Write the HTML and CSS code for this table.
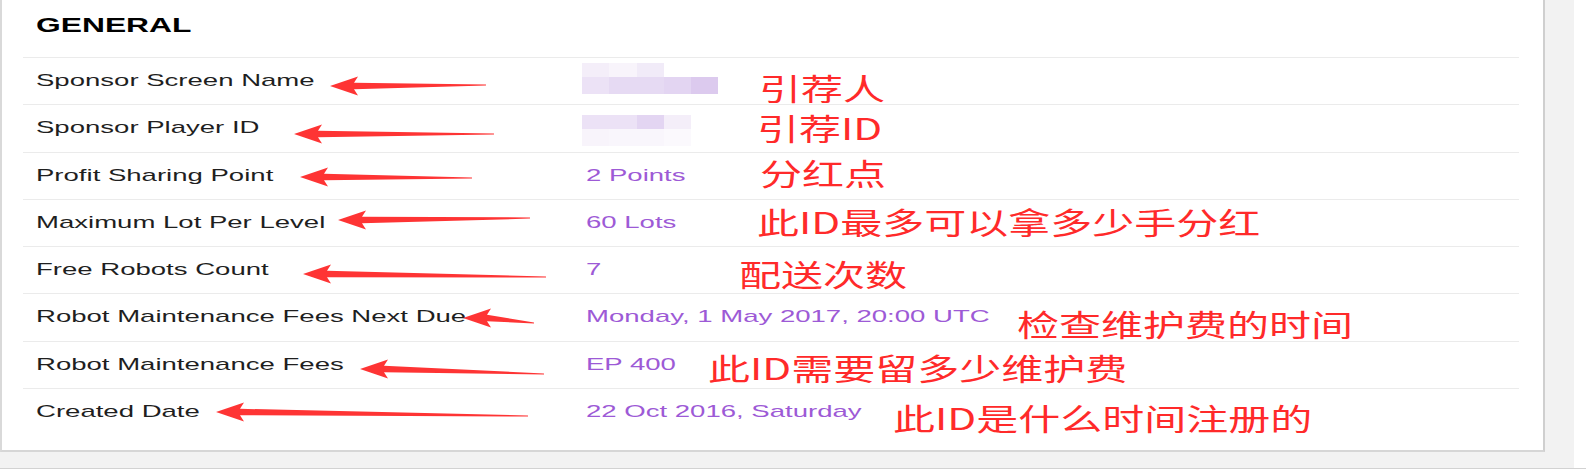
FILE: index.html
```html
<!DOCTYPE html>
<html lang="en">
<head>
<meta charset="utf-8">
<title>General</title>
<link rel="stylesheet" href="styles.css">
</head>
<body>
<div class="page">
  <div class="card">
    <h2 class="title"><span class="s">GENERAL</span></h2>
    <div class="row">
      <div class="label"><span class="s">Sponsor Screen Name</span></div>
      <div class="value">
        <div class="mosaic mosaic-1">
          <div class="mrow mrow-a"><i class="c1"></i><i class="c2"></i><i class="c3"></i><i class="c0"></i><i class="c0"></i></div>
          <div class="mrow mrow-b"><i class="c4"></i><i class="c5"></i><i class="c5"></i><i class="c6"></i><i class="c7"></i></div>
        </div>
      </div>
    </div>
    <div class="row">
      <div class="label"><span class="s">Sponsor Player ID</span></div>
      <div class="value">
        <div class="mosaic mosaic-2">
          <div class="mrow mrow-a"><i class="c4"></i><i class="c4"></i><i class="c6"></i><i class="c1"></i></div>
          <div class="mrow mrow-b"><i class="c2"></i><i class="c8"></i><i class="c8"></i><i class="c9"></i></div>
        </div>
      </div>
    </div>
    <div class="row">
      <div class="label"><span class="s">Profit Sharing Point</span></div>
      <div class="value"><span class="s">2 Points</span></div>
    </div>
    <div class="row">
      <div class="label"><span class="s">Maximum Lot Per Level</span></div>
      <div class="value"><span class="s">60 Lots</span></div>
    </div>
    <div class="row">
      <div class="label"><span class="s">Free Robots Count</span></div>
      <div class="value"><span class="s">7</span></div>
    </div>
    <div class="row">
      <div class="label"><span class="s">Robot Maintenance Fees Next Due</span></div>
      <div class="value"><span class="s">Monday, 1 May 2017, 20:00 UTC</span></div>
    </div>
    <div class="row">
      <div class="label"><span class="s">Robot Maintenance Fees</span></div>
      <div class="value"><span class="s">EP 400</span></div>
    </div>
    <div class="row">
      <div class="label"><span class="s">Created Date</span></div>
      <div class="value"><span class="s">22 Oct 2016, Saturday</span></div>
    </div>
  </div>
</div>
<div class="baseline"></div>

<svg class="arrows" width="1586" height="469" viewBox="0 0 1586 469" xmlns="http://www.w3.org/2000/svg">
  <g fill="#fe3434">
    <polygon points="330,86 358,76.5 354,82.8 486,84.4 486,85.6 354,89.2 358,95.5"/>
    <polygon points="294,134 322,124.5 318,130.8 494,133.4 494,134.6 318,137.2 322,143.5"/>
    <polygon points="300,177 328,167.5 324,173.8 472,177.4 472,178.6 324,180.2 328,186.5"/>
    <polygon points="338,220 366,210.5 362,216.8 530,217.4 530,218.6 362,223.2 366,229.5"/>
    <polygon points="303,274 331,264.5 327,270.8 546,276.4 546,277.6 327,277.2 331,283.5"/>
    <polygon points="463,318 491,308.5 487,314.8 534,322.4 534,323.6 487,321.2 491,327.5"/>
    <polygon points="360,369 388,359.5 384,365.8 544,373.4 544,374.6 384,372.2 388,378.5"/>
    <polygon points="216,412 244,402.5 240,408.8 528,415.4 528,416.6 240,415.2 244,421.5"/>
  </g>
</svg>
<div class="note n1">引荐人</div>
<div class="note n2">引荐ID</div>
<div class="note n3">分红点</div>
<div class="note n4">此ID最多可以拿多少手分红</div>
<div class="note n5">配送次数</div>
<div class="note n6">检查维护费的时间</div>
<div class="note n7">此ID需要留多少维护费</div>
<div class="note n8">此ID是什么时间注册的</div>
</body>
</html>
```

FILE: styles.css
```css
* { box-sizing: border-box; }
html, body { margin: 0; padding: 0; }
body {
  width: 1586px;
  height: 469px;
  overflow: hidden;
  background: #ffffff;
  position: relative;
  font-family: "Liberation Sans", Arial, sans-serif;
}
.page {
  width: 1574px;
  background: #f2f2f2;
  padding-bottom: 16px;
}
.card {
  width: 1545px;
  background: #ffffff;
  border-left: 2px solid #d9d9d9;
  border-right: 2px solid #cfcfcf;
  border-bottom: 2px solid #d6d6d6;
  padding: 0 24px 14px 21px;
}
.title {
  margin: 0;
  height: 58px;
  padding: 13px 0 0 13px;
  font-size: 20px;
  line-height: 24px;
  font-weight: bold;
  color: #000000;
  border-bottom: 1px solid #ebebeb;
}
.title .s { transform: scaleX(1.59); }
.row {
  display: grid;
  grid-template-columns: 550px 1fr;
  height: 47.3px;
  line-height: 46.3px;
  padding-left: 13px;
  border-bottom: 1px solid #ebebeb;
  font-size: 17px;
}
.row:last-child { border-bottom: none; }
.label { color: #1f1f1f; }
.value { color: #9d5ad6; }
.s {
  display: inline-block;
  white-space: nowrap;
  transform: scaleX(1.62);
  transform-origin: 0 50%;
}
.mosaic {
  margin-left: -4px;
  display: flex;
  flex-direction: column;
}
.mosaic-1 { margin-top: 5px; }
.mosaic-2 { margin-top: 10px; }
.mrow { display: flex; }
.mrow-a { height: 14px; }
.mrow-b { height: 17px; }
.mrow i { display: block; width: 27.3px; height: 100%; }
.c0 { background: #ffffff; }
.c1 { background: #f4eef9; }
.c2 { background: #f8f4fb; }
.c3 { background: #f1ebf8; }
.c4 { background: #ece2f6; }
.c5 { background: #e6daf3; }
.c6 { background: #e3d5f2; }
.c7 { background: #dccaee; }
.c8 { background: #f9f6fc; }
.c9 { background: #fbf9fd; }
.baseline {
  height: 2px;
  background: #d2d2d2;
}
.arrows {
  position: absolute;
  left: 0;
  top: 0;
  pointer-events: none;
}
.note {
  position: absolute;
  font-family: "Noto Sans CJK SC", "Noto Sans", sans-serif;
  font-size: 30px;
  line-height: 30px;
  height: 30px;
  color: #ff2a2a;
  white-space: nowrap;
  transform: scaleX(1.4);
  transform-origin: 0 0;
}
.n1 { left: 759px; top: 72px; }
.n2 { left: 757px; top: 112px; }
.n3 { left: 760px; top: 157px; }
.n4 { left: 757px; top: 206px; }
.n5 { left: 739px; top: 258px; }
.n6 { left: 1017px; top: 308px; }
.n7 { left: 708px; top: 352px; }
.n8 { left: 893px; top: 402px; }
```
